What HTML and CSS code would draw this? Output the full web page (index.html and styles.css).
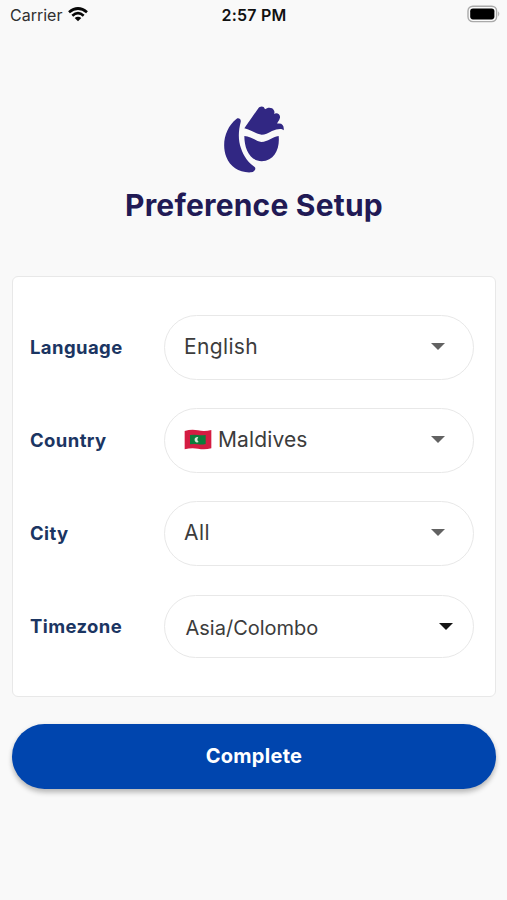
FILE: index.html
```html
<!DOCTYPE html>
<html lang="en">
<head>
<meta charset="utf-8">
<meta name="viewport" content="width=device-width, initial-scale=1">
<title>Preference Setup</title>
<link rel="stylesheet" href="styles.css">
</head>
<body>
<div class="screen">
  <header class="status">
    <div class="carrier">
      <span>Carrier</span>
      <svg class="wifi" viewBox="0 0 60 45" aria-hidden="true">
        <path d="M3 16Q30-7 57 16M13 26Q30 11 47 26" fill="none" stroke="#080808" stroke-width="8"/>
        <path d="M20 33Q30 25 40 33L30 43Z" fill="#080808"/>
      </svg>
    </div>
    <time class="clock">2:57 PM</time>
    <svg class="battery" viewBox="0 0 34 18" aria-hidden="true">
      <rect x="1" y="1.2" width="28.6" height="15.4" rx="4.8" fill="#fafafa" stroke="#aaa" stroke-width="1.4"/>
      <rect x="3.2" y="3.4" width="24.2" height="11" rx="2.8" fill="#000"/>
      <path d="M31.2 6.3Q33.4 8.9 31.2 11.5Z" fill="#aaa"/>
    </svg>
  </header>

  <section class="brand">
    <svg class="logo" viewBox="0 0 240 252" aria-hidden="true">
      <g fill="#312783">
        <path d="M68 62C75 59 82 64 80 72C73 99 72 127 81 151C89 175 103 195 121 206C128 211 122 223 111 223C76 225 49 207 37 177C22 139 33 89 68 62Z"/>
        <path d="M91 91L132 32C137 25 149 22 153 34C161 26 176 28 179 36C182 40 182 44 180 48C190 42 202 51 197 62C196 67 190 71 190 77C204 74 211 82 209 97C202 90 188 94 174 99C162 106 153 110 143 110C127 108 112 96 91 91Z"/>
        <path d="M91 114C110 115 124 128 142 132C163 131 174 117 194 114C198 151 182 188 143 190C106 188 91 151 91 114Z"/>
      </g>
    </svg>
    <h1>Preference Setup</h1>
  </section>

  <main class="card">
    <div class="row">
      <span class="label language">Language</span>
      <div class="select" role="combobox"><span class="value english">English</span><i class="caret"></i></div>
    </div>
    <div class="row">
      <span class="label country">Country</span>
      <div class="select" role="combobox">
        <svg class="flag" viewBox="0 0 84 63" aria-hidden="true">
          <path d="M2 6Q22 0 42 4T82 3V58Q62 63 42 59T2 61Z" fill="#d41c42"/>
          <path d="M18 18Q31 16 42 18T65 18V45Q53 48 42 46T18 46Z" fill="#0b7d3b"/>
          <path d="M43 25A8 8 0 1 0 44 39A10 10 0 0 1 43 25Z" fill="#d5ead9"/>
        </svg>
        <span class="value maldives">Maldives</span><i class="caret"></i>
      </div>
    </div>
    <div class="row">
      <span class="label city">City</span>
      <div class="select" role="combobox"><span class="value all">All</span><i class="caret"></i></div>
    </div>
    <div class="row last">
      <span class="label timezone">Timezone</span>
      <div class="select zone" role="combobox"><span class="value colombo">Asia/Colombo</span><i class="caret"></i></div>
    </div>
  </main>

  <button class="complete" type="button">Complete</button>
</div>
</body>
</html>
```
FILE: styles.css
```css
* { box-sizing: border-box; }
body {
  margin: 0;
  background: #f9f9f9;
  font-family: Inter, "Liberation Sans", sans-serif;
}
.screen { width: 507px; height: 900px; padding: 0 11px 0 12px; overflow: hidden; }
.status {
  display: grid;
  grid-template-columns: 1fr auto 1fr;
  align-items: center;
  height: 30px;
  margin: 0 -4px 0 -2px;
  color: #303030;
  font-size: 16px;
}
.carrier { display: flex; align-items: center; gap: 6px; }
.wifi { width: 20px; height: 15px; margin-top: -1px; }
.clock { color: #111; font-weight: 600; letter-spacing: .2px; margin: 0 1px 0 -1px; }
.battery { width: 34px; height: 18px; justify-self: end; margin-right: -1px; margin-top: -2px; }
.brand { display: flex; flex-direction: column; align-items: center; padding-top: 68px; height: 246px; }
.logo { width: 80px; height: 84px; }
h1 {
  margin: 3px 0 0;
  color: #211a55;
  font-size: 30px;
  line-height: 40px;
  font-weight: 650;
  letter-spacing: .2px;
  white-space: nowrap;
}
.card {
  height: 421px;
  padding: 38px 21px 0 17px;
  background: #fff;
  border: 1.5px solid #e8e8e8;
  border-radius: 6px;
}
.row { display: grid; grid-template-columns: 134px 310px; align-items: center; height: 65px; margin-bottom: 28px; }
.row.last { height: 63px; margin: 29px 0 0; }
.label { color: #1b3562; font-size: 18.5px; font-weight: 650; letter-spacing: .4px; margin: -1px 0 0; }
.last .label { margin-top: -2px; }
.select {
  display: flex;
  align-items: center;
  height: 100%;
  padding: 0 28px 2px 19px;
  border: 1.5px solid #e8e8e8;
  border-radius: 33px;
  color: #3c3c3c;
  font-size: 21px;
  letter-spacing: .12px;
}
.english { letter-spacing: .35px; }
.all { letter-spacing: .5px; }
.flag { width: 28px; height: 21px; margin-right: 6px; }
.caret {
  width: 14px;
  height: 7px;
  margin: 0 0 0 auto;
  background: #626262;
  clip-path: polygon(0 0, 100% 0, 50% 100%);
}
.zone { padding: 3px 20px 0 20.5px; font-size: 20px; letter-spacing: 0; }
.zone .caret { background: #141414; margin-top: -3px; }
.complete {
  display: block;
  width: 484px;
  height: 65px;
  margin-top: 27px;
  padding: 0 0 2px;
  border: 0;
  border-radius: 33px;
  background: #0045ae;
  color: #fff;
  box-shadow: 0 4px 5px rgba(0, 0, 0, .2), 0 1px 5px rgba(0, 0, 0, .1);
  font: 700 20px Inter, "Liberation Sans", sans-serif;
  letter-spacing: .3px;
}
```
